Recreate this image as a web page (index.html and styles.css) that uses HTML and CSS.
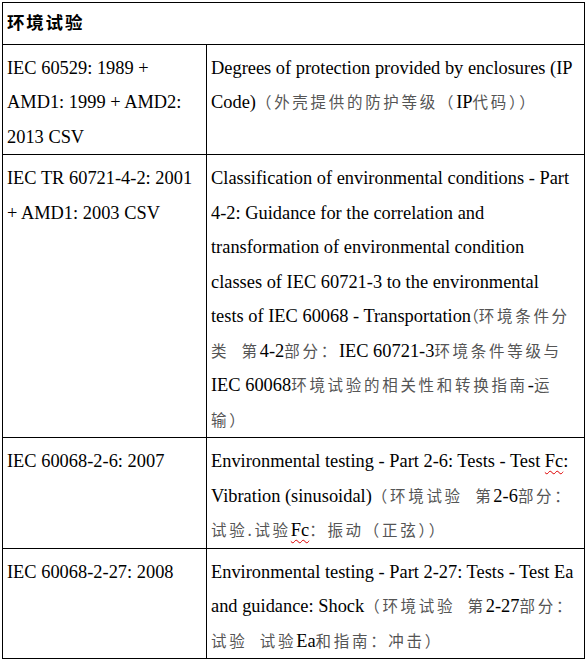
FILE: index.html
```html
<!DOCTYPE html>
<html lang="zh">
<head>
<meta charset="utf-8">
<link rel="stylesheet" href="styles.css">
</head>
<body>
<table class="spec">
  <colgroup><col class="c1"><col class="c2"></colgroup>
  <tr><th colspan="2" class="head"><span class="zhb">环境试验</span></th></tr>
  <tr>
    <td>IEC 60529: 1989 +<br>AMD1: 1999 + AMD2:<br>2013 CSV</td>
    <td>Degrees of protection provided by enclosures (IP<br>Code)<span class="zh">（外壳提供的防护等级（</span>IP<span class="zh">代码））</span></td>
  </tr>
  <tr>
    <td>IEC TR 60721-4-2: 2001<br>+ AMD1: 2003 CSV</td>
    <td>Classification of environmental conditions - Part<br>4-2: Guidance for the correlation and<br>transformation of environmental condition<br>classes of IEC 60721-3 to the environmental<br>tests of IEC 60068 - Transportation<span class="zh"><span class="hw">（</span>环境条件分</span><br><span class="zh">类&nbsp;&nbsp;第</span>4-2<span class="zh">部分：</span>IEC 60721-3<span class="zh">环境条件等级与</span><br>IEC 60068<span class="zh">环境试验的相关性和转换指南</span>-<span class="zh">运</span><br><span class="zh">输）</span></td>
  </tr>
  <tr>
    <td>IEC 60068-2-6: 2007</td>
    <td>Environmental testing - Part 2-6: Tests - Test <span class="sp">Fc</span>:<br>Vibration (sinusoidal)<span class="zh">（环境试验&nbsp;&nbsp;第</span>2-6<span class="zh">部分：</span><br><span class="zh">试验.试验</span><span class="sp">Fc</span><span class="zh">：振动（正弦））</span></td>
  </tr>
  <tr>
    <td>IEC 60068-2-27: 2008</td>
    <td>Environmental testing - Part 2-27: Tests - Test Ea<br>and guidance: Shock<span class="zh">（环境试验&nbsp;&nbsp;第</span>2-27<span class="zh">部分：</span><br><span class="zh">试验&nbsp;&nbsp;试验</span>Ea<span class="zh">和指南：冲击）</span></td>
  </tr>
</table>
</body>
</html>
```

FILE: styles.css
```css
html, body {
  margin: 0;
  padding: 0;
  background: #fff;
}
body {
  padding: 2px 0 0 2px;
  font-family: "Liberation Serif", "Noto Sans CJK SC", serif;
  font-size: 18.4px;
  color: #000;
}
.spec {
  border-collapse: collapse;
  width: 583px;
  table-layout: fixed;
}
.c1 { width: 204px; }
.spec th, .spec td {
  border: 1px solid #000;
  padding: 6px 1px 0 4px;
  line-height: 34.5px;
  vertical-align: top;
  text-align: left;
  white-space: nowrap;
  overflow: hidden;
}
.spec th.head {
  font-weight: normal;
  padding: 3px 4px 3px 4px;
}
.zhb {
  font-family: "Noto Sans CJK SC", sans-serif;
  font-weight: 700;
  font-size: 17.5px;
  letter-spacing: 1.8px;
  line-height: 1;
}
.zh {
  font-family: "Noto Sans CJK SC", sans-serif;
  color: #555;
  font-size: 15.5px;
  letter-spacing: 2.7px;
  line-height: 1;
}
.hw {
  font-feature-settings: "halt";
  letter-spacing: 0;
}
.sp {
  text-decoration: underline wavy #d00;
  text-decoration-thickness: 1px;
  text-underline-offset: 3px;
}
```
